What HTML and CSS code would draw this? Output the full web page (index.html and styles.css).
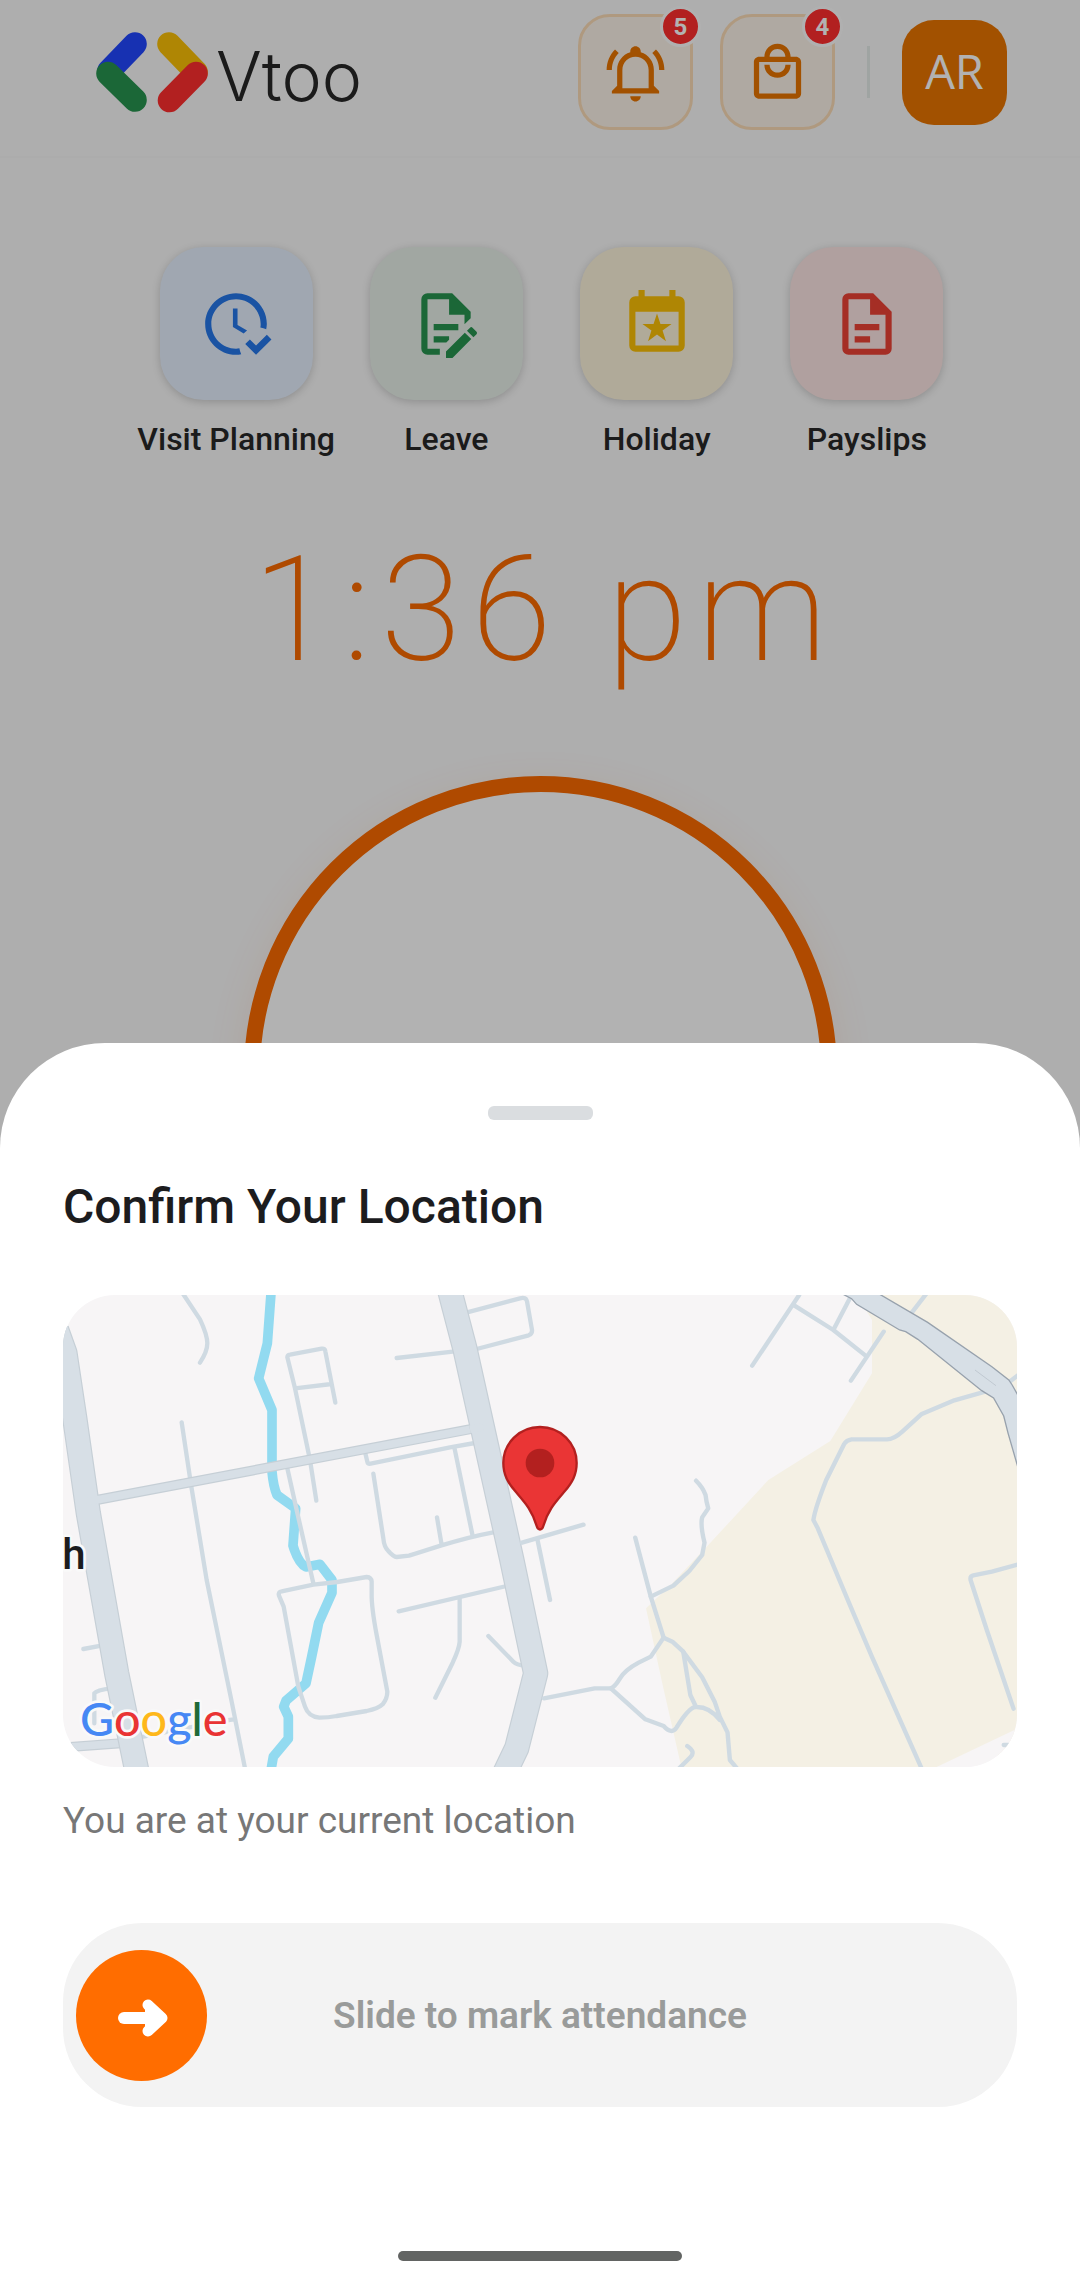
FILE: index.html
```
<!DOCTYPE html>
<html lang="en">
<head>
  <meta charset="UTF-8">
  <meta name="viewport" content="width=device-width, initial-scale=1">
  <title>Vtoo - Attendance</title>
  <link rel="stylesheet" href="styles.css">
</head>
<body>

  <div class="home">
    <header class="topbar">
      <div class="brand">
        <svg class="brand-mark" viewBox="96 32 112 81" fill="none" stroke-width="23.6" stroke-linecap="round">
          <path stroke="#2147ff" d="M135 44L109 71"/>
          <path stroke="#fbc007" d="M169 44L196 72"/>
          <path stroke="#289450" d="M108 73.5L135 100"/>
          <path stroke="#ff2e2e" d="M196 73.5L169.5 100.5"/>
        </svg>
        <span class="brand-name">Vtoo</span>
      </div>

      <div class="actions">
        <button class="icon-btn" type="button" aria-label="Notifications">
          <svg viewBox="0 0 24 24"><path d="M10 21H14C14 22.1 13.1 23 12 23S10 22.1 10 21M21 19V20H3V19L5 17V11C5 7.9 7 5.2 10 4.3V4C10 2.9 10.9 2 12 2S14 2.9 14 4V4.3C17 5.2 19 7.9 19 11V17L21 19M17 11C17 8.2 14.8 6 12 6S7 8.2 7 11V18H17V11M19.8 3.2L18.4 4.6C20 6.2 21 8.5 21 11H23C23 8.1 21.8 5.2 19.8 3.2M1 11H3C3 8.5 4 6.2 5.6 4.6L4.2 3.2C2.2 5.2 1 8.1 1 11Z"/></svg>
          <span class="badge">5</span>
        </button>
        <button class="icon-btn" type="button" aria-label="Orders">
          <svg viewBox="0 0 24 24"><path d="M19 6H17C17 3.2 14.8 1 12 1S7 3.2 7 6H5C3.9 6 3 6.9 3 8V20C3 21.1 3.9 22 5 22H19C20.1 22 21 21.1 21 20V8C21 6.9 20.1 6 19 6M12 3C13.7 3 15 4.3 15 6H9C9 4.3 10.3 3 12 3M19 20H5V8H19V20M12 12C10.3 12 9 10.7 9 9H7C7 11.8 9.2 14 12 14S17 11.8 17 9H15C15 10.7 13.7 12 12 12Z"/></svg>
          <span class="badge">4</span>
        </button>
        <span class="divider"></span>
        <button class="avatar" type="button">AR</button>
      </div>
    </header>

    <nav class="shortcuts">
      <a class="shortcut" href="#">
        <span class="tile blue">
          <svg viewBox="0 0 24 24"><path d="M23.5 17L18.5 22L15 18.5L16.5 17L18.5 19L22 15.5L23.5 17M13.1 19.9C12.7 20 12.4 20 12 20C7.6 20 4 16.4 4 12S7.6 4 12 4 20 7.6 20 12C20 12.4 20 12.7 19.9 13.1C20.6 13.2 21.2 13.4 21.8 13.7C21.9 13.1 22 12.6 22 12C22 6.5 17.5 2 12 2S2 6.5 2 12C2 17.5 6.5 22 12 22C12.6 22 13.2 21.9 13.7 21.8C13.4 21.2 13.2 20.6 13.1 19.9M15.6 14.1L12.5 12.3V7H11V13L14.5 15.1C14.8 14.7 15.2 14.4 15.6 14.1Z"/></svg>
        </span>
        Visit Planning
      </a>
      <a class="shortcut" href="#">
        <span class="tile green">
          <svg viewBox="0 0 24 24"><path d="M8,12H16V14H8V12M10,20H6V4H13V9H18V12.1L20,10.1V8L14,2H6A2,2 0 0,0 4,4V20A2,2 0 0,0 6,22H10V20M8,18H12.1L13,17.1V16H8V18M20.2,13C20.3,13 20.5,13.1 20.6,13.2L21.9,14.5C22.1,14.7 22.1,15.1 21.9,15.3L20.9,16.3L18.8,14.2L19.8,13.2C19.9,13.1 20,13 20.2,13M20.2,16.9L14.1,23H12V20.9L18.1,14.8L20.2,16.9Z"/></svg>
        </span>
        Leave
      </a>
      <a class="shortcut" href="#">
        <span class="tile yellow">
          <svg viewBox="0 0 24 24"><path d="M19,19H5V8H19M16,1V3H8V1H6V3H5A2,2 0 0,0 3,5V19A2,2 0 0,0 5,21H19A2,2 0 0,0 21,19V5A2,2 0 0,0 19,3H18V1M10.88,12H7.27L10.19,14.11L9.08,17.56L12,15.43L14.92,17.56L13.8,14.12L16.72,12H13.12L12,8.56L10.88,12Z"/></svg>
        </span>
        Holiday
      </a>
      <a class="shortcut" href="#">
        <span class="tile red">
          <svg viewBox="0 0 24 24"><path d="M6,2A2,2 0 0,0 4,4V20A2,2 0 0,0 6,22H18A2,2 0 0,0 20,20V8L14,2H6M6,4H13V9H18V20H6V4M8,12V14H16V12H8M8,16V18H13V16H8Z"/></svg>
        </span>
        Payslips
      </a>
    </nav>

    <div class="clock">1:36 pm</div>
    <div class="ring"></div>
  </div>

  <div class="scrim"></div>

  <section class="sheet">
    <div class="grabber"></div>
    <h1>Confirm Your Location</h1>

    <svg class="map" viewBox="39 45 2862 1416" preserveAspectRatio="xMidYMid slice">
      <rect x="39" y="45" width="2862" height="1416" fill="#f7f5f6"/>

      <!-- land area on the east side -->
      <path fill="#f4f0e4" d="M2420 45H2901V1415L2660 1461H1894L1838 1215L1788 985L1862 915L1970 800L2155 600L2341 483L2466 280V120Z"/>
      <path fill="#f7f5f6" d="M2901 1346L2660 1461H2901Z"/>

      <!-- river -->
      <path fill="none" stroke="#92daf0" stroke-width="29" stroke-linejoin="round" d="M663 40L652 190L626 295L666 390V575Q670 620 681 645L737 685L729 797Q745 850 768 861L810 853L846 900V938L806 1028L785 1130L768 1210L708 1262L701 1280L715 1310V1376L670 1430L663 1470"/>

      <!-- small streets, west -->
      <g class="street">
        <path d="M398 40L450 118Q472 165 472 190T450 248"/>
        <path d="M395 427L424 620L470 900L545 1265L586 1470M550 1318L500 1326L280 1370"/>
        <path d="M799 662L780 540L735 325L712 232Q712 225 720 224L815 206Q825 204 826 214L856 368M735 325L845 312"/>
        <path d="M712 565L740 690L790 910"/>
        <path d="M1040 234L1215 214M1240 100L1410 55Q1428 50 1431 64L1446 150Q1447 162 1436 166L1280 207"/>
        <path d="M946 520L952 545Q953 552 962 551L1200 502L1275 489M1213 502L1268 768"/>
        <path d="M970 581L1000 775Q1002 800 1015 813Q1030 830 1040 831L1077 827L1172 797Q1260 770 1330 757M1161 712L1175 795"/>
        <path d="M1046 994L1370 918M1229 955V1085Q1228 1105 1208 1148L1156 1253M1315 1068L1390 1145Q1400 1155 1425 1157"/>
        <path d="M790 914L695 934Q684 935 687 947L701 980L745 1220L765 1280Q775 1310 808 1313Q835 1313 860 1308L950 1293Q985 1286 998 1273Q1012 1255 1012 1235L980 1065Q964 980 965 940V905Q964 892 950 891L862 906Z"/>
        <path d="M100 1107L158 1096M133 1330V1240Q140 1230 185 1225"/>
      </g>

      <!-- main roads -->
      <g fill="none" stroke-linejoin="round">
        <path stroke="#c6cfd6" stroke-width="30" d="M140 660L1285 443M20 1404L235 1388"/>
        <path stroke="#d7dfe6" stroke-width="23" d="M140 660L1285 443M20 1404L235 1388"/>
        <path stroke="#c6cfd6" stroke-width="76" d="M1200 35L1245 207L1385 837L1457 1180L1400 1405L1364 1480M20 150L45 220L75 420L115 700L200 1180L262 1480"/>
        <path stroke="#d7dfe6" stroke-width="69" d="M1200 35L1245 207L1385 837L1457 1180L1400 1405L1364 1480M20 150L45 220L75 420L115 700L200 1180L262 1480"/>
        <path stroke="#d7dfe6" stroke-width="23" d="M110 666L150 658M1260 448L1300 440"/>
      </g>

      <!-- small streets, east -->
      <g class="street" transform="translate(1350) scale(1.0142 1)">
        <path d="M65 788L247 734M110 775L148 960"/>
        <path d="M400 773L446 950L484 1073L446 1130L410 1148Q370 1170 355 1195Q340 1220 328 1225H280L130 1255"/>
        <path d="M446 950L513 917L560 873L598 825L605 788Q592 735 598 712L616 685Q610 665 608 645Q600 622 580 602"/>
        <path d="M484 1073L510 1085L542 1115L598 1192L635 1265L650 1310L673 1357L680 1440L705 1470"/>
        <path d="M542 1115L563 1245L580 1281M650 1320Q620 1280 580 1281Q560 1280 522 1343Q508 1365 484 1338L430 1318L328 1225"/>
        <path d="M554 1398Q580 1415 563 1432L530 1465"/>
        <path d="M885 45L746 257M870 76L986 150L1085 230M1035 55L986 150M1135 155L1038 302"/>
        <path d="M1435 335L1344 361L1246 403L1190 455Q1165 478 1145 478H1040Q1025 480 1018 492L965 600Q932 685 927 720L940 745L1033 970L1100 1130L1247 1465"/>
        <path d="M1545 850L1455 875L1400 886Q1390 888 1392 900L1440 1050L1519 1286M1262 40L1218 98M1510 303L1540 280M1490 1395H1505"/>
      </g>

      <!-- highway -->
      <g transform="translate(1350) scale(1.0142 1)">
        <path fill="#d7dfe6" stroke="#98a2ad" stroke-width="4" d="M1000 35L1040 56L1055 73L1182 150L1200 155L1236 178L1425 332L1460 354L1490 408L1503 460L1540 590V360L1515 315L1505 300L1455 260L1265 127L1110 35Z"/>
        <path stroke="#b4bdc6" stroke-width="2" d="M1405 270L1467 317"/>
      </g>

      <!-- labels -->
      <text class="map-label" x="37" y="866">h</text>
      <text class="map-logo" x="90" y="1369"><tspan fill="#4688f4">G</tspan><tspan fill="#e93434">o</tspan><tspan fill="#feb81b">o</tspan><tspan fill="#4688f4">g</tspan><tspan fill="#1f6a39">l</tspan><tspan fill="#e93434">e</tspan></text>

      <!-- pin -->
      <path fill="#ea3535" stroke="#b3201f" stroke-width="7" d="M1470 441C1408 441 1360 490 1360 549C1360 585 1374 608 1396 634C1425 668 1446 690 1460 738C1464 752 1476 752 1480 738C1494 690 1515 668 1544 634C1566 608 1580 585 1580 549C1580 490 1532 441 1470 441Z"/>
      <circle cx="1470" cy="549" r="43" fill="#b3201f"/>
    </svg>

    <p class="status">You are at your current location</p>

    <div class="slide">
      <input class="slide-input" id="attendance" type="range" min="0" max="100" value="0">
      <label class="slide-label" for="attendance">Slide to mark attendance</label>
      <svg class="slide-arrow" viewBox="0 0 52 40" fill="none" stroke="#fff" stroke-linecap="round" stroke-linejoin="round">
        <path stroke-width="12" d="M7 20H36"/>
        <path stroke-width="11" d="M31 7L45 20L31 33"/>
        <path fill="#fff" stroke-width="2" d="M29 10L44 20L29 30Z"/>
      </svg>
    </div>

    <div class="home-bar"></div>
  </section>

</body>
</html>
```

FILE: styles.css
```
* {
  box-sizing: border-box;
}

body {
  margin: 0;
  height: 100vh;
  overflow: hidden;
  background-color: #f9f9f9;
  color: #1c1c1e;
  font-family: Roboto, sans-serif;
}

button {
  padding: 0;
  font-family: inherit;
  cursor: pointer;
}

/* top bar */
.topbar {
  display: flex;
  align-items: flex-start;
  justify-content: space-between;
  height: 158px;
  padding: 14px 73px 0 96px;
  border-bottom: 2px solid #f6f6f6;
}

.brand {
  display: flex;
  align-items: center;
  gap: 8px;
  height: 116px;
}

.brand-mark {
  width: 112px;
  height: 81px;
}

.brand-name {
  font-family: Inter, sans-serif;
  font-weight: 300;
  font-size: 68px;
  line-height: 76px;
  padding-top: 8px;
  color: #282828;
}

.actions {
  display: flex;
  align-items: center;
  gap: 27px;
}

.icon-btn {
  position: relative;
  display: flex;
  align-items: center;
  justify-content: center;
  width: 115px;
  height: 116px;
  border: 3px solid #fbdcb7;
  border-radius: 32px;
  background-color: #fbf3e9;
}

.icon-btn svg {
  width: 63px;
  height: 63px;
  fill: #e97500;
}

.badge {
  position: absolute;
  top: -11px;
  right: -11px;
  width: 41px;
  height: 41px;
  border: 3px solid #fdfdfd;
  border-radius: 50%;
  background-color: #ff2e2e;
  color: #fff;
  font-size: 24px;
  font-weight: 700;
  line-height: 36px;
  text-align: center;
}

.divider {
  width: 3px;
  height: 52px;
  margin: 0 5px;
  background-color: #e4ebe8;
}

.avatar {
  width: 105px;
  height: 105px;
  padding-bottom: 3px;
  border: none;
  border-radius: 32px;
  background-color: #e97500;
  color: #fff;
  font-family: "Open Sans", sans-serif;
  font-size: 47px;
}

/* shortcuts */
.shortcuts {
  display: grid;
  grid-template-columns: repeat(4, 1fr);
  padding: 89px 108px 0 131px;
}

.shortcut {
  display: flex;
  flex-direction: column;
  align-items: center;
  gap: 20px;
  color: #282828;
  font-size: 32px;
  font-weight: 500;
  line-height: 38px;
  text-decoration: none;
  white-space: nowrap;
}

.tile {
  display: flex;
  align-items: center;
  justify-content: center;
  width: 153px;
  height: 153px;
  border-radius: 44px;
  box-shadow: 0 2px 8px rgba(0, 0, 0, 0.18);
}

.tile svg {
  width: 74px;
  height: 74px;
}

.blue {
  background-color: #e6f0fe;
  fill: #2678ea;
}

.green {
  background-color: #e7f0e9;
  fill: #289450;
}

.yellow {
  background-color: #fdf4dc;
  fill: #fbc007;
}

.red {
  background-color: #fce6e4;
  fill: #ec4235;
}

/* clock */
.clock {
  margin-top: 68px;
  padding-left: 10px;
  color: #fb6a00;
  font-size: 146px;
  font-weight: 200;
  line-height: 170px;
  letter-spacing: 10px;
  text-align: center;
}

.ring {
  width: 593px;
  height: 593px;
  margin: 80px auto 0;
  border: 16px solid #fb6a00;
  border-radius: 50%;
  background-color: #fff;
  box-shadow: 0 10px 40px rgba(251, 106, 0, 0.1);
}

.scrim {
  position: fixed;
  inset: 0;
  background-color: rgba(0, 0, 0, 0.3);
}

/* bottom sheet */
.sheet {
  position: fixed;
  left: 0;
  right: 0;
  bottom: 0;
  padding: 63px 63px 27px;
  border-radius: 105px 105px 0 0;
  background-color: #fff;
}

.grabber {
  width: 105px;
  height: 14px;
  margin: 0 auto;
  border-radius: 6px;
  background-color: #dadde0;
}

h1 {
  margin: 58px 0 59px;
  font-size: 48px;
  font-weight: 500;
  line-height: 58px;
}

.map {
  display: block;
  width: 100%;
  height: 472px;
  border-radius: 52px;
}

.street {
  fill: none;
  stroke: #cfdae2;
  stroke-width: 13px;
  stroke-linecap: round;
  stroke-linejoin: round;
}

.map-label,
.map-logo {
  stroke: #f9f9f9;
  stroke-width: 16px;
  stroke-linejoin: round;
  paint-order: stroke;
}

.map-label {
  fill: #1c1c1e;
  font-size: 126px;
  font-weight: 500;
}

.map-logo {
  font-family: Lato, sans-serif;
  font-size: 140px;
  font-weight: 500;
}

.status {
  margin: 32px 0 80px;
  color: #777;
  font-size: 37px;
  line-height: 44px;
}

.slide {
  position: relative;
  height: 184px;
}

.slide-input {
  appearance: none;
  display: block;
  width: 100%;
  height: 100%;
  margin: 0;
  padding: 0 13px;
  border-radius: 79px;
  background-color: #f3f3f3;
  cursor: pointer;
}

.slide-input::-webkit-slider-thumb {
  appearance: none;
  width: 131px;
  height: 131px;
  border: none;
  border-radius: 50%;
  background-color: #ff6d00;
}

.slide-label {
  position: absolute;
  inset: 0;
  display: flex;
  align-items: center;
  justify-content: center;
  color: #999b9a;
  font-size: 37px;
  font-weight: 600;
  pointer-events: none;
}

.slide-arrow {
  position: absolute;
  top: 75px;
  left: 54px;
  width: 52px;
  height: 40px;
  pointer-events: none;
}

.home-bar {
  width: 284px;
  height: 10px;
  margin: 144px auto 0;
  border-radius: 5px;
  background-color: #626463;
}
```
